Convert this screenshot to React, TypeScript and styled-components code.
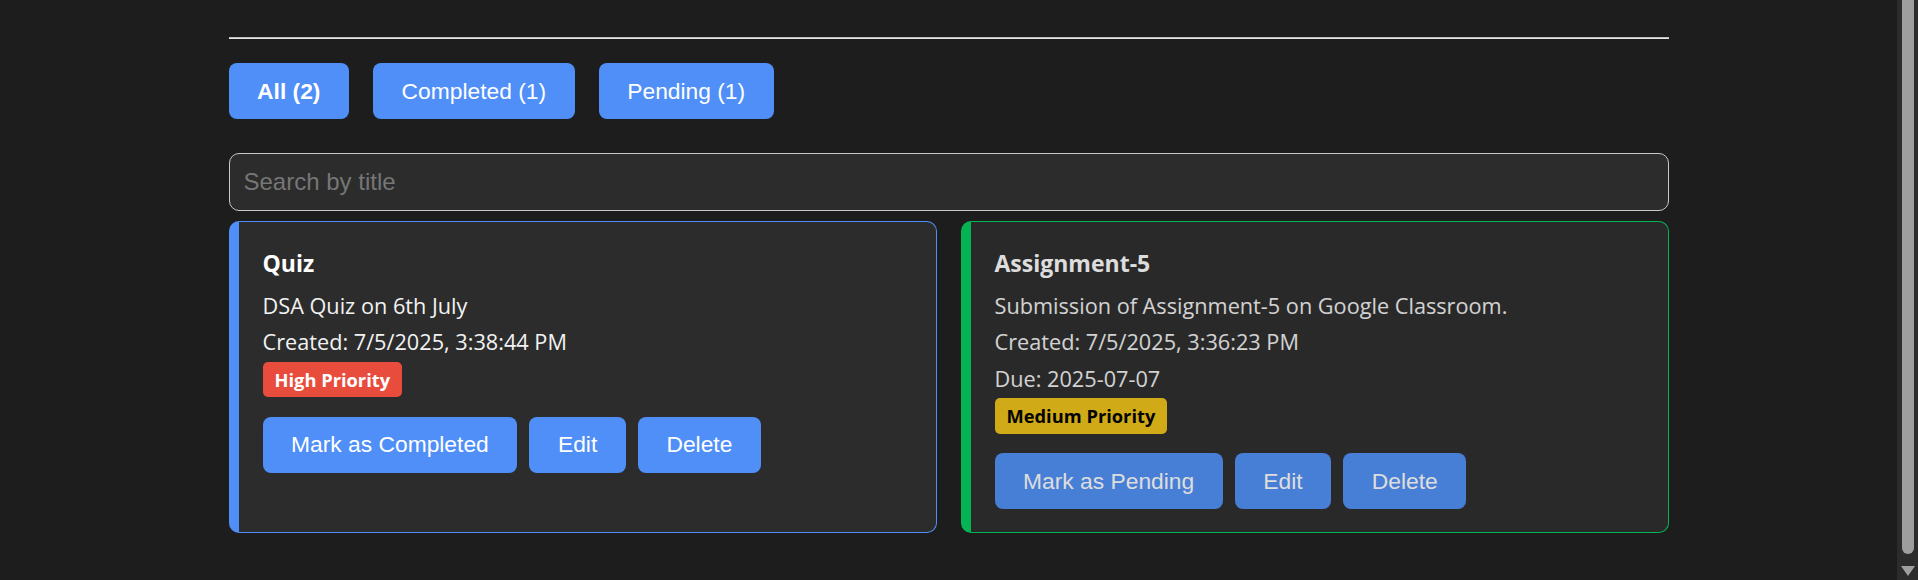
import React from "react";
import styled, { createGlobalStyle } from "styled-components";

const GlobalStyle = createGlobalStyle`
  html, body {
    margin: 0;
    padding: 0;
    background: #1d1d1d;
    height: 580px;
    overflow: hidden;
  }
  * { box-sizing: border-box; }
`;

const Page = styled.div`
  display: flex;
  height: 580px;
  background: #1d1d1d;
`;

const Main = styled.main`
  flex: 1;
  display: flex;
  justify-content: center;
  padding-top: 37px;
`;

const Container = styled.div`
  width: 1440px;
  display: flex;
  flex-direction: column;
`;

const Divider = styled.hr`
  margin: 0;
  height: 0;
  border: none;
  border-top: 1px solid #bdbdbd;
  border-bottom: 1px solid #e6e6e6;
`;

const FilterBar = styled.div`
  display: flex;
  gap: 24px;
  margin-top: 24px;
`;

const Button = styled.button<{ $bold?: boolean }>`
  font-family: "Liberation Sans", Arial, sans-serif;
  font-size: 22.8px;
  font-weight: ${(p) => (p.$bold ? 700 : 400)};
  color: #ffffff;
  background: #4f8ff7;
  border: none;
  border-radius: 8px;
  height: 56px;
  padding: 0 28.6px;
  line-height: normal;
  cursor: pointer;
  white-space: nowrap;
`;

const SearchInput = styled.input`
  margin-top: 34px;
  width: 100%;
  height: 58px;
  background: #2c2c2c;
  border: 1px solid #c9c9c9;
  border-radius: 10px;
  padding: 0 14px;
  font-family: "Liberation Sans", Arial, sans-serif;
  font-size: 24px;
  color: #eeeeee;
  outline: none;
  &::placeholder {
    color: #767676;
  }
`;

const CardGrid = styled.div`
  display: grid;
  grid-template-columns: 1fr 1fr;
  gap: 24px;
  margin-top: 10px;
`;

const Card = styled.div<{ $accent: string; $dim?: boolean }>`
  background: #2c2c2c;
  border: 1px solid ${(p) => p.$accent};
  border-left: 10px solid ${(p) => p.$accent};
  border-radius: 10px;
  padding: 26px 24px 23px 24px;
  opacity: ${(p) => (p.$dim ? 0.85 : 1)};
  display: flex;
  flex-direction: column;
  align-items: flex-start;
  font-family: "Open Sans", "Noto Sans", sans-serif;
  color: #f2f2f2;
`;

const Title = styled.h3`
  margin: 0 0 4px 0;
  font-size: 23px;
  line-height: 31px;
  font-weight: 700;
  color: #ffffff;
`;

const Line = styled.p`
  margin: 7.5px 0 0 0;
  font-size: 21.7px;
  line-height: 29px;
`;

const Badge = styled.span<{ $bg: string; $fg: string }>`
  margin-top: 5.5px;
  display: inline-block;
  background: ${(p) => p.$bg};
  color: ${(p) => p.$fg};
  font-size: 18.3px;
  font-weight: 700;
  line-height: 25.7px;
  padding: 5px 12px;
  border-radius: 5px;
`;

const Actions = styled.div`
  display: flex;
  gap: 12px;
  margin-top: 19.5px;
`;

const ScrollTrack = styled.div`
  width: 21px;
  height: 580px;
  background: #2c2c2c;
  display: flex;
  flex-direction: column;
  padding-left: 5px;
`;

const ScrollThumb = styled.div`
  width: 12px;
  height: 554px;
  background: #9e9e9e;
  border-radius: 0 0 6px 6px;
`;

const ScrollArrow = styled.svg`
  margin-top: 12px;
  margin-left: -1px;
  display: block;
`;

type Task = {
  title: string;
  desc: string;
  created: string;
  due?: string;
  priority: "High" | "Medium";
  completed: boolean;
};

const tasks: Task[] = [
  {
    title: "Quiz",
    desc: "DSA Quiz on 6th July",
    created: "7/5/2025, 3:38:44 PM",
    priority: "High",
    completed: false,
  },
  {
    title: "Assignment-5",
    desc: "Submission of Assignment-5 on Google Classroom.",
    created: "7/5/2025, 3:36:23 PM",
    due: "2025-07-07",
    priority: "Medium",
    completed: true,
  },
];

const priorityStyle = {
  High: { bg: "#e74c3c", fg: "#ffffff" },
  Medium: { bg: "#f0c417", fg: "#000000" },
};

export default function App() {
  return (
    <>
      <GlobalStyle />
      <Page>
        <Main>
          <Container>
            <Divider />
            <FilterBar>
              <Button $bold>All (2)</Button>
              <Button>Completed (1)</Button>
              <Button>Pending (1)</Button>
            </FilterBar>
            <SearchInput placeholder="Search by title" />
            <CardGrid>
              {tasks.map((t) => (
                <Card
                  key={t.title}
                  $accent={t.completed ? "#00cf5c" : "#4f8ff7"}
                  $dim={t.completed}
                >
                  <Title>{t.title}</Title>
                  <Line>{t.desc}</Line>
                  <Line>Created: {t.created}</Line>
                  {t.due && <Line>Due: {t.due}</Line>}
                  <Badge
                    $bg={priorityStyle[t.priority].bg}
                    $fg={priorityStyle[t.priority].fg}
                  >
                    {t.priority} Priority
                  </Badge>
                  <Actions>
                    <Button>
                      {t.completed ? "Mark as Pending" : "Mark as Completed"}
                    </Button>
                    <Button>Edit</Button>
                    <Button>Delete</Button>
                  </Actions>
                </Card>
              ))}
            </CardGrid>
          </Container>
        </Main>
        <ScrollTrack>
          <ScrollThumb />
          <ScrollArrow width="14" height="10" viewBox="0 0 14 10">
            <polygon points="0,0 14,0 7,10" fill="#9e9e9e" />
          </ScrollArrow>
        </ScrollTrack>
      </Page>
    </>
  );
}
